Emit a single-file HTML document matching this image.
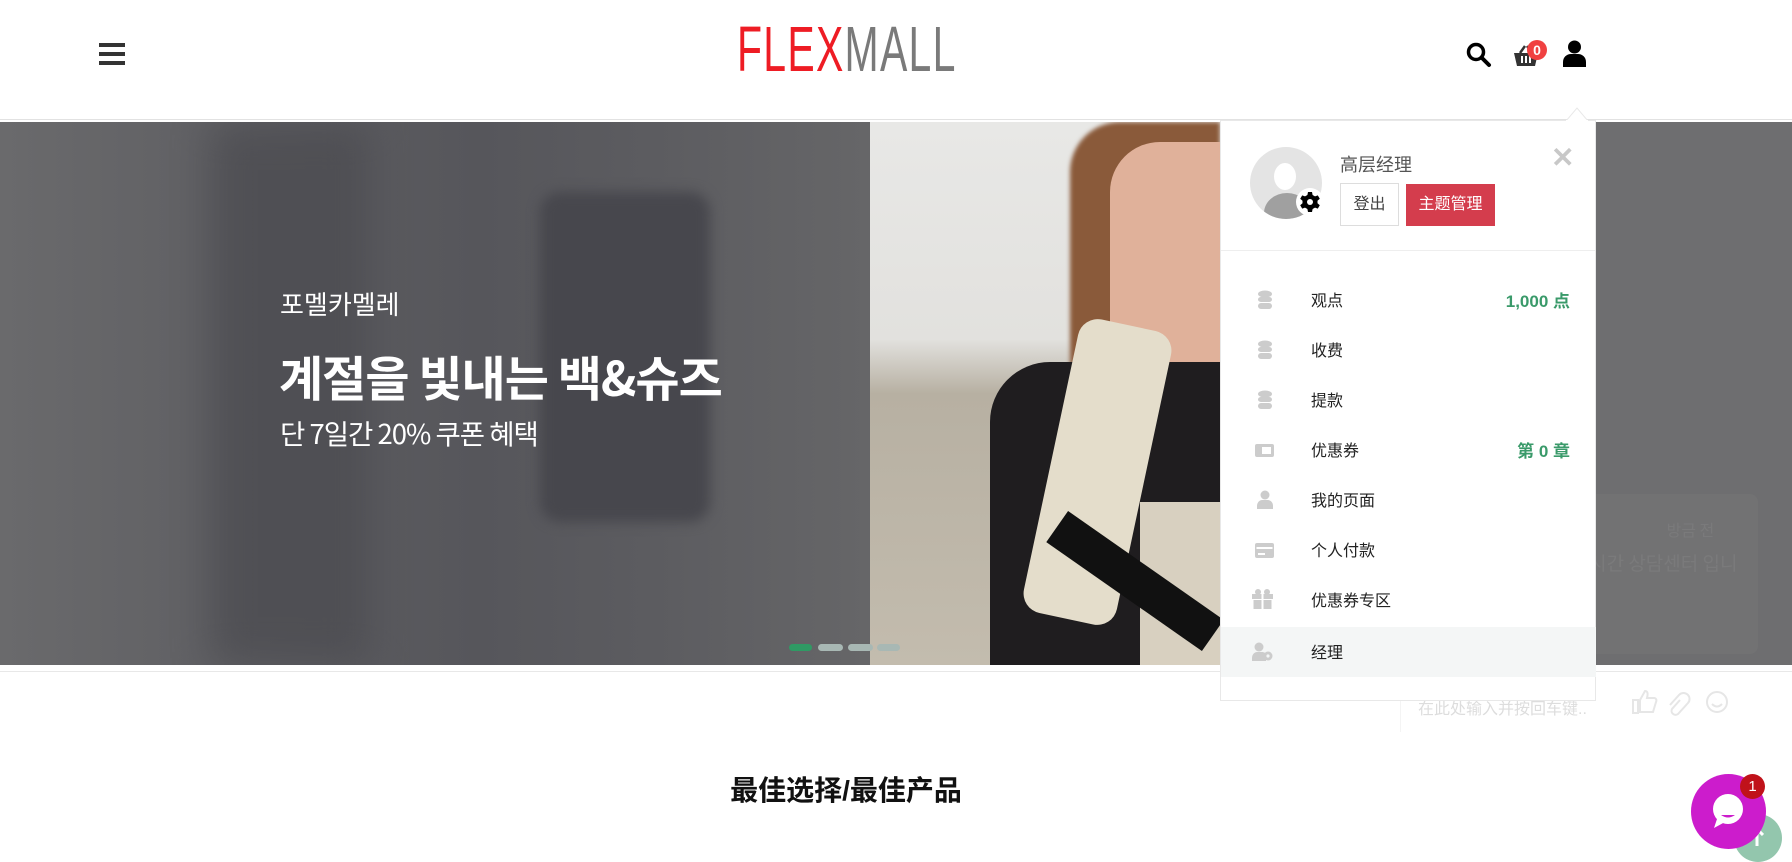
<!DOCTYPE html>
<html><head><meta charset="utf-8"><style>
*{margin:0;padding:0;box-sizing:border-box}
body{width:1792px;height:857px;overflow:hidden;background:#fff;font-family:"Liberation Sans","Noto Sans CJK SC","Noto Sans CJK KR",sans-serif;position:relative}
.abs{position:absolute}
.menu div.it{position:absolute;left:0;width:375px;height:50px}
.it .ic{position:absolute;left:36px;top:15px}
.it .tx{position:absolute;left:90px;top:12px;font-size:16px;color:#222}
.it .rv{position:absolute;right:26px;top:12px;font-size:17px;color:#3a9a6a;font-weight:bold}
</style></head><body>
<!-- header -->
<div class="abs" style="left:0;top:0;width:1792px;height:120px;background:#fff;border-bottom:1px solid #e2e2e2"></div>
<div class="abs" style="left:99px;top:43px;width:26px;height:4px;background:#333;box-shadow:0 9px 0 #333,0 18px 0 #333"></div>
<div class="abs" style="left:737px;top:14px;font-size:64px;letter-spacing:2px;line-height:70px;transform:scaleX(0.64);transform-origin:left top;white-space:nowrap"><span style="color:#ee1c24">FLEX</span><span style="color:#7a7a7a">MALL</span></div>
<svg class="abs" style="left:1466px;top:42px" width="26" height="26" viewBox="0 0 26 26"><circle cx="10" cy="10" r="7.5" fill="none" stroke="#000" stroke-width="3.5"/><path d="M15.5 15.5L23 23" stroke="#000" stroke-width="4" stroke-linecap="round"/></svg>
<svg class="abs" style="left:1513px;top:44px" width="30" height="24" viewBox="0 0 30 24"><path d="M1 9h24l-3 13H4z" fill="#333"/><path d="M7 9l5-7M19 9l-5-7" stroke="#333" stroke-width="2.5"/><path d="M9 12v7M13 12v7M17 12v7" stroke="#fff" stroke-width="2"/></svg>
<div class="abs" style="left:1527px;top:40px;width:20px;height:20px;border-radius:50%;background:#f04141;color:#fff;font-size:14px;font-weight:bold;text-align:center;line-height:20px">0</div>
<svg class="abs" style="left:1563px;top:40px" width="23" height="27" viewBox="0 0 23 27"><circle cx="11.5" cy="7" r="6.5" fill="#000"/><path d="M0 27v-5c0-5 4-8 8-8h7c4 0 8 3 8 8v5z" fill="#000"/></svg>
<!-- banner -->
<div class="abs" style="left:0;top:122px;width:1792px;height:543px;background:#6e6e70;overflow:hidden">
 <div class="abs" style="left:0;top:0;width:870px;height:543px;background:linear-gradient(90deg,#6a6a6c 0%,#5e5e62 30%,#56565b 55%,#5c5c60 75%,#666668 100%)"></div>
 <div class="abs" style="left:210px;top:0;width:160px;height:543px;background:#4a4a4f;filter:blur(20px);opacity:.7"></div>
 <div class="abs" style="left:540px;top:70px;width:170px;height:330px;background:#47474d;border-radius:20px;filter:blur(6px)"></div>
 <div class="abs" style="left:870px;top:0;width:350px;height:543px;background:linear-gradient(180deg,#e8e8e6 0%,#e2e1de 40%,#b7b0a2 50%,#c3bcae 100%)"></div>
 <div class="abs" style="left:1070px;top:0;width:150px;height:320px;background:#8a5a3a;border-radius:50px 0 0 30px;filter:blur(2px)"></div>
 <div class="abs" style="left:1110px;top:20px;width:110px;height:240px;background:#e0b19a;border-radius:50px 0 0 55px"></div>
 <div class="abs" style="left:990px;top:240px;width:230px;height:303px;background:#1f1d1f;border-radius:60px 0 0 0"></div>
 <div class="abs" style="left:1050px;top:200px;width:95px;height:300px;background:#e4ddcb;border-radius:20px;transform:rotate(12deg)"></div>
 <div class="abs" style="left:1140px;top:380px;width:80px;height:163px;background:#d8d0c0"></div>
 <div class="abs" style="left:1040px;top:440px;width:190px;height:38px;background:#111;transform:rotate(35deg)"></div>
 <div class="abs" style="left:280px;top:163px;font-size:26px;color:#fff;font-family:'Noto Sans CJK KR',sans-serif">포멜카멜레</div>
 <div class="abs" style="left:279px;top:218px;font-size:48px;color:#fff;font-weight:bold;font-family:'Noto Sans CJK KR',sans-serif;letter-spacing:-1px">계절을 빛내는 백&amp;슈즈</div>
 <div class="abs" style="left:280px;top:290px;font-size:27.5px;color:#fff;font-family:'Noto Sans CJK KR',sans-serif;letter-spacing:-1px">단 7일간 20% 쿠폰 혜택</div>
 <div class="abs" style="left:789px;top:522px;width:23px;height:7px;border-radius:4px;background:#2f9a64"></div>
 <div class="abs" style="left:818px;top:522px;width:25px;height:7px;border-radius:4px;background:#a8b8b4"></div>
 <div class="abs" style="left:848px;top:522px;width:25px;height:7px;border-radius:4px;background:#a8b8b4"></div>
 <div class="abs" style="left:877px;top:522px;width:23px;height:7px;border-radius:4px;background:#a8b8b4"></div>
 <div class="abs" style="left:1403px;top:372px;width:355px;height:160px;background:#727273;border-radius:8px"></div>
 <div class="abs" style="left:1418px;top:395px;font-size:16px;color:#7a7a7b;font-family:'Noto Sans CJK KR',sans-serif">플렉스 실시간 상담 <span style="margin-left:120px">방금 전</span></div>
 <div class="abs" style="left:1418px;top:428px;width:320px;font-size:19px;line-height:26px;color:#7a7a7b;font-family:'Noto Sans CJK KR',sans-serif">안녕하세요. 플렉스 실시간 상담센터 입니다.<br>무엇을 도와드릴까요?</div>
</div>
<div class="abs" style="left:0;top:671px;width:1792px;height:1px;background:#e8e8e8"></div>
<div class="abs" style="left:1400px;top:672px;width:380px;height:60px;border-left:1px solid #f4f4f4"></div>
<div class="abs" style="left:1418px;top:695px;font-size:16px;color:#ddd">在此处输入并按回车键..</div>
<svg class="abs" style="left:1630px;top:688px" width="100" height="28"><path d="M3 12h5v13H3zM10 12l5-9c3 0 3 3 2 7h7c2 0 3 2 2 4l-3 10H10z" fill="none" stroke="#e6e6e6" stroke-width="2"/><path d="M50 12l-8 9a4 4 0 006 5l10-11a6 6 0 00-9-8l-9 10" fill="none" stroke="#e6e6e6" stroke-width="2"/><circle cx="87" cy="14" r="10" fill="none" stroke="#e6e6e6" stroke-width="2"/><path d="M82 16q5 5 10 0" fill="none" stroke="#e6e6e6" stroke-width="2"/></svg>
<!-- panel -->
<div class="abs" style="left:1220px;top:120px;width:376px;height:581px;background:#fff;border:1px solid #e8e8e8">
 <div class="abs" style="left:29px;top:26px;width:72px;height:72px;border-radius:50%;background:#e4e4e4;overflow:hidden">
  <div class="abs" style="left:24px;top:16px;width:22px;height:27px;border-radius:50%;background:#fff"></div>
  <div class="abs" style="left:14px;top:46px;width:46px;height:40px;border-radius:50% 50% 0 0;background:#a0a0a0"></div>
 </div>
 <div class="abs" style="left:75px;top:67px;width:28px;height:28px;border-radius:50%;background:#fff"></div>
 <svg class="abs" style="left:79px;top:71px" width="20" height="20" viewBox="0 0 20 20"><path d="M8 0h4l.6 3 2.4 1.4 2.8-1 2 3.4-2.3 2v2.4l2.3 2-2 3.4-2.8-1L12.6 17 12 20H8l-.6-3L5 15.6l-2.8 1-2-3.4 2.3-2V8.8l-2.3-2 2-3.4 2.8 1L7.4 3z" fill="#000"/><circle cx="10" cy="10" r="3" fill="#fff"/></svg>
 <div class="abs" style="left:119px;top:30px;font-size:18px;color:#555">高层经理</div>
 <div class="abs" style="left:119px;top:62px;width:59px;height:43px;border:1px solid #ddd;font-size:16px;color:#444;text-align:center;line-height:41px">登出</div>
 <div class="abs" style="left:185px;top:63px;width:89px;height:42px;background:#d43d4d;font-size:16px;color:#fff;text-align:center;line-height:42px">主题管理</div>
 <div class="abs" style="left:330px;top:22px;font-size:28px;color:#c8c8c8;font-weight:bold;line-height:30px">✕</div>
 <div class="abs" style="left:0;top:129px;width:374px;height:1px;background:#eee"></div>
 <div class="menu">
  <div class="it" style="top:154px"><svg class="ic" width="16" height="20"><ellipse cx="8" cy="4" rx="7" ry="3.5" fill="#ccc"/><rect x="1" y="7" width="14" height="5" rx="3" fill="#ccc"/><rect x="1" y="13" width="14" height="6" rx="3" fill="#ccc"/></svg><span class="tx">观点</span><span class="rv">1,000 点</span></div>
  <div class="it" style="top:204px"><svg class="ic" width="16" height="20"><ellipse cx="8" cy="4" rx="7" ry="3.5" fill="#ccc"/><rect x="1" y="7" width="14" height="5" rx="3" fill="#ccc"/><rect x="1" y="13" width="14" height="6" rx="3" fill="#ccc"/></svg><span class="tx">收费</span></div>
  <div class="it" style="top:254px"><svg class="ic" width="16" height="20"><ellipse cx="8" cy="4" rx="7" ry="3.5" fill="#ccc"/><rect x="1" y="7" width="14" height="5" rx="3" fill="#ccc"/><rect x="1" y="13" width="14" height="6" rx="3" fill="#ccc"/></svg><span class="tx">提款</span></div>
  <div class="it" style="top:304px"><svg class="ic" width="20" height="18" style="left:34px;top:17px"><rect x="0" y="2" width="19" height="13" rx="2" fill="#ccc"/><rect x="7" y="5" width="9" height="7" fill="#fff"/></svg><span class="tx">优惠券</span><span class="rv">第 0 章</span></div>
  <div class="it" style="top:354px"><svg class="ic" width="16" height="20"><circle cx="8" cy="5" r="4.5" fill="#ccc"/><path d="M0 19v-3c0-4 3-6 5-6h6c2 0 5 2 5 6v3z" fill="#ccc"/></svg><span class="tx">我的页面</span></div>
  <div class="it" style="top:404px"><svg class="ic" width="20" height="18" style="left:34px;top:17px"><rect x="0" y="1" width="19" height="15" rx="2" fill="#ccc"/><rect x="1.5" y="5" width="16" height="2" fill="#fff"/><rect x="3" y="11" width="7" height="2" fill="#fff"/></svg><span class="tx">个人付款</span></div>
  <div class="it" style="top:454px"><svg class="ic" width="22" height="20" style="left:31px;top:14px"><rect x="0" y="5" width="21" height="5" fill="#ccc"/><rect x="1.5" y="11" width="18" height="9" fill="#ccc"/><rect x="9.5" y="5" width="2" height="15" fill="#fff"/><circle cx="6" cy="3" r="3" fill="#ccc"/><circle cx="15" cy="3" r="3" fill="#ccc"/></svg><span class="tx">优惠券专区</span></div>
  <div class="it" style="top:506px;height:50px;background:#f4f6f6"><svg class="ic" width="22" height="20" style="left:31px;top:15px"><circle cx="7" cy="5" r="4.5" fill="#ccc"/><path d="M0 19v-3c0-4 3-6 5-6h5c2 0 4 1 4 3v6z" fill="#ccc"/><circle cx="16" cy="14" r="4.5" fill="#ccc"/><circle cx="16" cy="14" r="1.6" fill="#f4f6f6"/></svg><span class="tx">经理</span></div>
 </div>
</div>
<svg class="abs" style="left:1566px;top:107px" width="22" height="14"><path d="M0 14L11 1L22 14" fill="#fff" stroke="#e8e8e8"/><rect x="0" y="13" width="22" height="2" fill="#fff"/></svg>
<!-- bottom -->
<div class="abs" style="left:0;top:769px;width:1692px;text-align:center;font-size:28px;font-weight:bold;color:#111">最佳选择/最佳产品</div>
<div class="abs" style="left:1734px;top:814px;width:48px;height:48px;border-radius:50%;background:#93c6ad"></div>
<svg class="abs" style="left:1750px;top:826px" width="14" height="20"><path d="M7 20V3M1 9l6-6 6 6" stroke="#fff" stroke-width="3" fill="none"/></svg>
<div class="abs" style="left:1691px;top:774px;width:75px;height:75px;border-radius:50%;background:#cc1ccc"></div>
<svg class="abs" style="left:1708px;top:791px" width="40" height="40"><circle cx="20" cy="18" r="15" fill="#fff"/><path d="M9 28L6 37L17 31z" fill="#fff"/><path d="M13 24q7 5 14 0z" fill="#cc1ccc"/></svg>
<div class="abs" style="left:1740px;top:774px;width:25px;height:25px;border-radius:50%;background:#c0121a;color:#fff;font-size:15px;text-align:center;line-height:25px">1</div>
</body></html>
